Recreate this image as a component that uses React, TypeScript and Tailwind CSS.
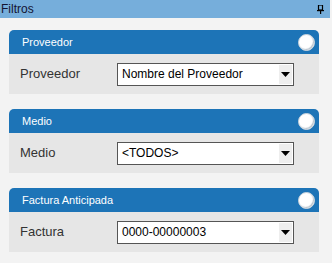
function Knob() {
  return (
    <div className="w-[17px] h-[17px] rounded-full bg-white border border-[#c9d3dc] shadow-[inset_-1px_-1px_1px_#b8c2cc]" />
  );
}

function FilterPanel({ title, label, value }: { title: string; label: string; value: string }) {
  return (
    <div className="flex flex-col">
      <div className="h-[24px] bg-[#1d74b7] rounded-t-[5px] flex items-center justify-between pl-[13px] pr-[4px]">
        <span className="text-white text-[11px]">{title}</span>
        <Knob />
      </div>
      <div className="h-[40px] bg-[#e6e6e6] flex items-center pl-[11px]">
        <span className="w-[97px] text-[13px] text-[#333]">{label}</span>
        <div className="w-[177px] h-[23px] bg-white border border-[#555] flex items-center justify-between">
          <span className="pl-[4px] text-[12px] text-black">{value}</span>
          <div className="w-[13px] h-[19px] mr-[1px] bg-[#eee] flex items-center justify-center">
            <svg width="9" height="5" viewBox="0 0 9 5">
              <polygon points="0,0 9,0 4.5,5" fill="#000" />
            </svg>
          </div>
        </div>
      </div>
    </div>
  );
}

export default function App() {
  return (
    <div className="w-[332px] h-[263px] bg-[#f3f3f3] font-['Liberation_Sans',sans-serif] overflow-hidden">
      <div className="h-[18px] w-[330px] bg-[#76aedb] flex items-center justify-between pl-[1px] pr-[6px]">
        <span className="text-[12px] text-[#141432] leading-none">Filtros</span>
        <svg width="7" height="9" viewBox="0 0 7 9">
          <rect x="1.5" y="0" width="4" height="5" fill="none" stroke="#000" strokeWidth="1.2" />
          <rect x="0" y="5" width="7" height="1.2" fill="#000" />
          <rect x="3" y="6" width="1.2" height="3" fill="#000" />
        </svg>
      </div>
      <div className="flex flex-col gap-[15px] pt-[12px] pl-[9px] w-[319px]">
        <FilterPanel title="Proveedor" label="Proveedor" value="Nombre del Proveedor" />
        <FilterPanel title="Medio" label="Medio" value="<TODOS>" />
        <FilterPanel title="Factura Anticipada" label="Factura" value="0000-00000003" />
      </div>
    </div>
  );
}
